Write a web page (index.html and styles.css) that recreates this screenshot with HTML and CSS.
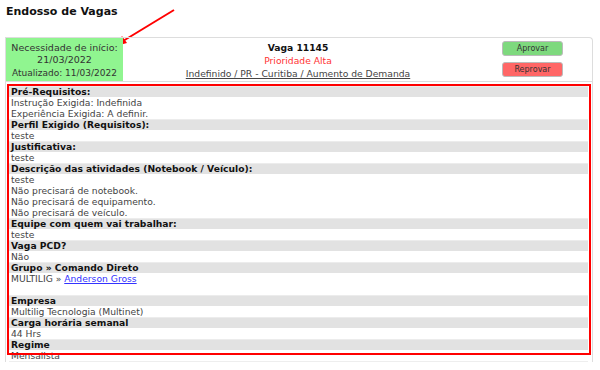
FILE: index.html
```html
<!DOCTYPE html>
<html lang="pt-BR">
<head>
  <meta charset="UTF-8">
  <title>Endosso de Vagas</title>
  <link rel="stylesheet" href="styles.css">
</head>
<body>
<h1 class="page-title">Endosso de Vagas</h1>

<!-- annotation arrow -->
<svg class="note-arrow" width="70" height="45" viewBox="0 0 70 45">
  <line x1="60" y1="4" x2="9" y2="35" stroke="#f00" stroke-width="2"/>
  <polygon points="2,40 8,30 13,37" fill="#f00"/>
</svg>

<div class="card">
  <div class="card-head">
    <div class="start-box">
      <div>Necessidade de início:</div>
      <div>21/03/2022</div>
      <div class="updated">Atualizado: 11/03/2022</div>
    </div>
    <div class="vaga-info">
      <div class="vaga-num">Vaga 11145</div>
      <div class="priority">Prioridade Alta</div>
      <div class="vaga-path">Indefinido / PR - Curitiba / Aumento de Demanda</div>
    </div>
    <div class="actions">
      <button class="btn btn-ok">Aprovar</button>
      <button class="btn btn-no">Reprovar</button>
    </div>
  </div>

  <div class="details">
    <div class="row label">Pré-Requisitos:</div>
    <div class="row">Instrução Exigida: Indefinida</div>
    <div class="row">Experiência Exigida: A definir.</div>
    <div class="row label">Perfil Exigido (Requisitos):</div>
    <div class="row">teste</div>
    <div class="row label">Justificativa:</div>
    <div class="row">teste</div>
    <div class="row label">Descrição das atividades (Notebook / Veículo):</div>
    <div class="row">teste</div>
    <div class="row">Não precisará de notebook.</div>
    <div class="row">Não precisará de equipamento.</div>
    <div class="row">Não precisará de veículo.</div>
    <div class="row label">Equipe com quem vai trabalhar:</div>
    <div class="row">teste</div>
    <div class="row label">Vaga PCD?</div>
    <div class="row">Não</div>
    <div class="row label">Grupo » Comando Direto</div>
    <div class="row">MULTILIG » <a href="#">Anderson Gross</a></div>
    <div class="row blank"></div>
    <div class="row label">Empresa</div>
    <div class="row">Multilig Tecnologia (Multinet)</div>
    <div class="row label">Carga horária semanal</div>
    <div class="row">44 Hrs</div>
    <div class="row label">Regime</div>
    <div class="row last">Mensalista</div>
  </div>

  <!-- annotation box -->
  <div class="note-box"></div>
</div>
</body>
</html>
```

FILE: styles.css
```css
body {
  margin: 0;
  font-family: "DejaVu Sans", Verdana, sans-serif;
  font-size: 9.2px;
  color: #444;
  background: #fff;
  position: relative;
}

.page-title {
  margin: 0;
  padding: 5px 6px 0;
  height: 32px;
  font-size: 11px;
  font-weight: bold;
  color: #111;
}

.note-arrow {
  position: absolute;
  left: 114px;
  top: 6px;
}

.card {
  position: relative;
  margin: 0 7px 0 5px;
  border: 1px solid #ddd;
  border-radius: 0 4px 0 0;
  border-bottom: none;
}

.card-head {
  display: grid;
  grid-template-columns: 117px 1fr 119px;
  height: 43px;
  border-bottom: 1px solid #ddd;
}

.start-box {
  background: #90f590;
  text-align: center;
  line-height: 12px;
  padding-top: 4px;
  font-size: 9.5px;
  color: #333;
}

.start-box .updated {
  font-size: 9px;
  margin-top: 1px;
}

.vaga-info {
  text-align: center;
  line-height: 13px;
  padding-top: 3px;
}

.vaga-num {
  font-weight: bold;
  color: #111;
}

.priority {
  color: #f33;
}

.vaga-path {
  text-decoration: underline;
  color: #444;
}

.actions {
  display: flex;
  flex-direction: column;
  align-items: center;
  gap: 6px;
  padding-top: 3px;
}

.btn {
  width: 61px;
  height: 15px;
  padding: 0;
  border: 1px solid #bbb;
  border-radius: 3px;
  font-family: "DejaVu Sans", Verdana, sans-serif;
  font-size: 8px;
  color: #333;
}

.btn-ok {
  background: #7ed97e;
}

.btn-no {
  background: #f66;
}

.details {
  padding: 4px 4px 0 3px;
}

.row {
  height: 11px;
  line-height: 11px;
  padding-left: 2px;
  white-space: nowrap;
}

.row.label {
  background: #e2e2e2;
  box-shadow: inset 0 1px 0 #ececec;
  font-weight: bold;
  color: #111;
}

.row.last {
  border-bottom: 1px solid #eee;
}

.row a {
  color: #33f;
}

.note-box {
  position: absolute;
  left: 1px;
  top: 46px;
  width: 580px;
  height: 267px;
  border: 2px solid #f00;
}
```
